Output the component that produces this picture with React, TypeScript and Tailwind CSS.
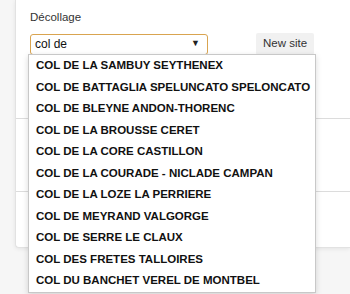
const sites = [
  'COL DE LA SAMBUY SEYTHENEX',
  'COL DE BATTAGLIA SPELUNCATO SPELONCATO',
  'COL DE BLEYNE ANDON-THORENC',
  'COL DE LA BROUSSE CERET',
  'COL DE LA CORE CASTILLON',
  'COL DE LA COURADE - NICLADE CAMPAN',
  'COL DE LA LOZE LA PERRIERE',
  'COL DE MEYRAND VALGORGE',
  'COL DE SERRE LE CLAUX',
  'COL DES FRETES TALLOIRES',
  'COL DU BANCHET VEREL DE MONTBEL',
];

export default function App() {
  return (
    <div
      className="relative w-[350px] h-[294px] overflow-hidden bg-[#f6f6f6] text-[#333]"
      style={{ fontFamily: '"Liberation Sans", Arial, sans-serif' }}
    >
      {/* Card behind */}
      <div className="ml-[15px] h-[248px] bg-white border-l border-b border-[#e2e2e2] rounded-bl-[4px] shadow-[0_1px_4px_rgba(0,0,0,0.08)] flex flex-col">
        <div className="pl-[14px] pt-[10px] h-[118px]">
          <div className="text-[11.5px] leading-[14px]">Décollage</div>
          <div className="flex items-center mt-[9px]">
            <div className="w-[178px] h-[21px] border border-[#d9a450] rounded-[3px] flex items-center justify-between pl-[4px] pr-[3px] bg-white">
              <span className="text-[12px] text-[#111]">col de</span>
              <span className="text-[9px] mr-[4px] text-[#222]">▼</span>
            </div>
            <div className="ml-[48px] h-[22px] px-[7px] bg-[#f1f1f1] rounded-[2px] flex items-center text-[11.5px] text-[#333]">
              New site
            </div>
          </div>
        </div>
        <div className="border-t border-[#dcdcdc] h-[73px]" />
        <div className="border-t border-[#dcdcdc] flex-1" />
      </div>

      {/* Dropdown menu */}
      <div className="absolute left-[28px] top-[54px] w-[288px] bg-white border border-[#c8c8c8] shadow-[0_2px_6px_rgba(0,0,0,0.15)]">
        {sites.map((s) => (
          <div
            key={s}
            className="h-[21.5px] pl-[7px] flex items-center text-[11.5px] font-bold text-[#111] whitespace-nowrap overflow-hidden"
          >
            {s}
          </div>
        ))}
      </div>
    </div>
  );
}
